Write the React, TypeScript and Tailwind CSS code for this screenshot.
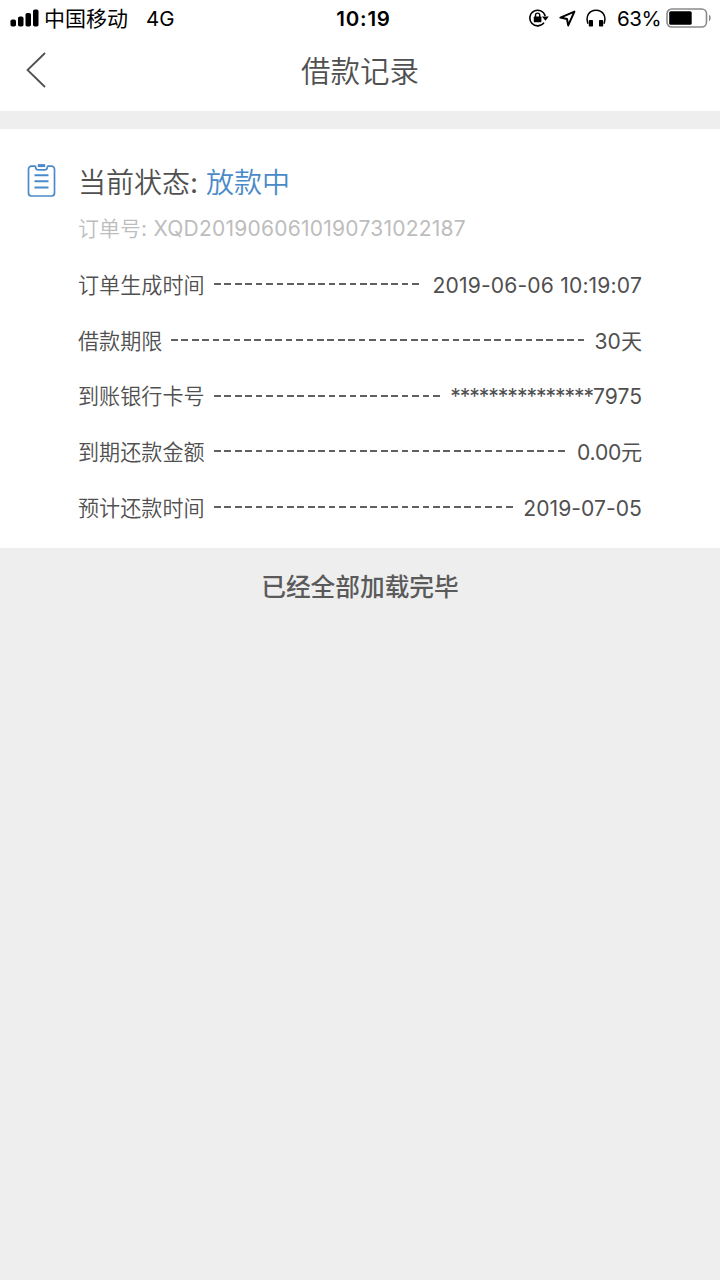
import React from 'react';

interface RecordRow {
  label: string;
  value: string;
  mask?: string;
  valueClass?: string;
}

const RECORD_ROWS: RecordRow[] = [
  { label: '订单生成时间', value: '2019-06-06 10:19:07', valueClass: 'tracking-[0.16px]' },
  { label: '借款期限', value: '30天' },
  { label: '到账银行卡号', mask: '***************', value: '7975' },
  { label: '到期还款金额', value: '0.00元', valueClass: 'tracking-[-0.2px]' },
  { label: '预计还款时间', value: '2019-07-05', valueClass: 'tracking-[0.05px]' }
];

function SignalIcon() {
  return (
    <svg className="w-[29px] h-[18px]" viewBox="0 0 29 18" fill="currentColor">
      <rect x="0.5" y="10.5" width="5.5" height="7" rx="1.8" />
      <rect x="8" y="7.5" width="5.5" height="10" rx="1.8" />
      <rect x="15.5" y="4" width="5.5" height="13.5" rx="1.8" />
      <rect x="23" y="0.5" width="5.5" height="17" rx="1.8" />
    </svg>
  );
}

function RotationLockIcon() {
  return (
    <svg className="w-5 h-[18px]" viewBox="0 0 20 18" fill="none" stroke="currentColor">
      <path d="M15 13.6A7.8 7.8 0 1 1 16.2 7" strokeWidth="1.6" />
      <path d="M13 7.4h6.8l-3.4 4.4z" fill="currentColor" stroke="none" />
      <rect x="4.8" y="7.6" width="7.6" height="5.6" rx="0.6" fill="currentColor" stroke="none" />
      <path d="M6.5 8V6.2a2.1 2.1 0 0 1 4.2 0V8" strokeWidth="1.4" />
    </svg>
  );
}

function LocationIcon() {
  return (
    <svg className="w-[17px] h-[17px]" viewBox="0 0 17 17" fill="none" stroke="currentColor" strokeWidth="2" strokeLinejoin="round">
      <path d="M15.4 1.6L1.4 7.6L8 9L9.2 15.4z" />
    </svg>
  );
}

function HeadphonesIcon() {
  return (
    <svg className="w-5 h-[18px]" viewBox="0 0 20 18" fill="none" stroke="currentColor">
      <path d="M2 14.8C-0.6 8 2.6 1.2 10 1.2S20.6 8 18 14.8" strokeWidth="1.5" />
      <rect x="2.8" y="11" width="4.2" height="6.6" rx="0.8" fill="currentColor" stroke="none" />
      <rect x="13" y="11" width="4.2" height="6.6" rx="0.8" fill="currentColor" stroke="none" />
    </svg>
  );
}

function BatteryIcon() {
  return (
    <svg className="w-[46px] h-[20px]" viewBox="0 0 46 20" fill="none">
      <rect x="1" y="1" width="39.5" height="18" rx="4.8" stroke="#8a8a8a" strokeWidth="1.6" />
      <rect x="3.2" y="3.2" width="22.5" height="13.6" rx="1.6" fill="#000" />
      <path d="M43 6.8c2.2 1 2.2 5.4 0 6.4z" fill="#8a8a8a" />
    </svg>
  );
}

function ClipboardIcon() {
  return (
    <svg className="w-[29px] h-[34px]" viewBox="0 0 29 34" fill="none" stroke="#4a8ac9">
      <path d="M8.5 3.2h-4a3 3 0 0 0-3 3V30a3 3 0 0 0 3 3h20a3 3 0 0 0 3-3V6.2a3 3 0 0 0-3-3h-4" strokeWidth="1.7" />
      <path d="M8.5 2.8c0 3 .5 4 2.5 4h7c2 0 2.500-1 2.500-4" strokeWidth="1.7" />
      <path d="M10.8 2.600h7.400" strokeWidth="3" />
      <path d="M7.500 12.300h14M7.500 18.300h14M7.500 24.400h14" strokeWidth="2" />
    </svg>
  );
}

function StatusBar() {
  return (
    <div className="flex h-9 items-center text-black">
      <div className="flex flex-1 items-center pl-[10px]">
        <SignalIcon />
        <span className="mt-px ml-[5px] text-[21px]">中国移动</span>
        <span className="mt-[2px] ml-[18px] text-[20.5px]">4G</span>
      </div>
      <span className="mt-[2px] -mr-[5px] text-[20.5px] font-semibold tracking-[0.8px]">10:19</span>
      <div className="flex flex-1 items-center justify-end pr-[8px]">
        <div className="-ml-px flex items-center gap-[10px] pr-px">
          <RotationLockIcon />
          <LocationIcon />
          <HeadphonesIcon />
        </div>
        <span className="mt-[2px] ml-[10px] w-[43px] text-[20.5px] tracking-[-0.5px]">63%</span>
        <div className="ml-[6px]">
          <BatteryIcon />
        </div>
      </div>
    </div>
  );
}

export default function App() {
  return (
    <div className="flex h-[1280px] w-[720px] flex-col overflow-hidden bg-[#eee] font-['Inter','Noto_Sans_CJK_SC',sans-serif] whitespace-nowrap text-[#505050]">
      <header className="h-[111px] bg-white">
        <StatusBar />
        <div className="grid h-[68px] grid-cols-[80px_1fr_80px] items-center">
          <svg className="mb-[2px] ml-[26px] w-5 h-9" viewBox="0 0 20 36" fill="none" stroke="currentColor" strokeWidth="1.8">
            <path d="M19 1L1.5 18L19 35" />
          </svg>
          <h1 className="text-center text-[29.5px] leading-[70px] font-[350]">借款记录</h1>
        </div>
      </header>

      <main className="mt-[18px] flex h-[419px] bg-white pt-[34px] pl-[27px]">
        <ClipboardIcon />
        <section className="mt-px ml-[22px] w-[564px]">
          <h2 className="mt-px h-[37px] text-[28px] leading-[37px] font-[350]">
            当前状态<span className="font-normal">:</span> <span className="text-[#4a8ac9]">放款中</span>
          </h2>
          <p className="mt-[13px] h-7 text-[21px] leading-7 font-[350] text-[#bdbdbd]">
            订单号<span className="font-normal tracking-[0.24px]">: XQD2019060610190731022187</span>
          </p>
          <dl className="mt-[14px]">
            {RECORD_ROWS.map((row) => (
              <div key={row.label} className="flex h-[55.7px] items-center leading-[56px] text-[21.1px]">
                <dt className="mt-[2px] font-[350]">{row.label}</dt>
                {/* dashed leader */}
                <div className="mx-[9px] mb-px h-[2px] flex-1 bg-[repeating-linear-gradient(90deg,#606060_0px,#606060_6.7px,transparent_6.7px,transparent_10.43px)]" />
                <dd className="mt-[2px]">
                  {row.mask && <span className="tracking-[-1.05px]">{row.mask}</span>}
                  <span className={row.valueClass}>{row.value}</span>
                </dd>
              </div>
            ))}
          </dl>
        </section>
      </main>

      <p className="mt-[21px] text-center text-[24.7px] leading-9 font-medium text-[#5a5a5a]">已经全部加载完毕</p>
    </div>
  );
}
